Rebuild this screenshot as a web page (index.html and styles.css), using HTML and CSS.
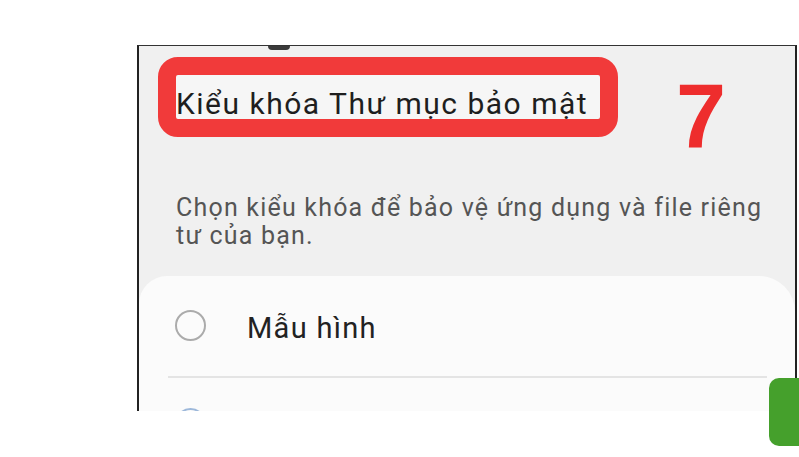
FILE: index.html
```html
<!DOCTYPE html>
<html lang="vi">
<head>
  <meta charset="UTF-8">
  <meta name="viewport" content="width=device-width, initial-scale=1.0">
  <title>Kiểu khóa Thư mục bảo mật</title>
  <link rel="stylesheet" href="styles.css">
</head>
<body>

<div class="shot">
  <div class="status"><span class="status-pill"></span></div>

  <div class="head">
    <div class="mark-box">
      <h1 class="title">Kiểu khóa Thư mục bảo mật</h1>
    </div>
    <div class="step">7</div>
  </div>

  <p class="desc">Chọn kiểu khóa để bảo vệ ứng dụng và file riêng tư của bạn.</p>

  <div class="card">
    <div class="row">
      <span class="radio"></span>
      <span class="label">Mẫu hình</span>
    </div>
    <div class="divider"></div>
    <!-- hàng tiếp theo bị cắt ở mép ảnh -->
    <div class="row row-peek">
      <span class="radio radio-on"></span>
    </div>
  </div>
</div>

<!-- mép nút xanh bên phải -->
<div class="side-tab"></div>

</body>
</html>
```

FILE: styles.css
```css
body {
  margin: 0;
  background-color: #fff;
  font-family: Roboto, "Noto Sans", sans-serif;
}

.shot {
  margin: 45px 0 0 137px;
  width: 656px;
  height: 365px;
  overflow: hidden;
  background-color: #f0f0f0;
  border-top: 1px solid #333;
  border-left: 2px solid #222;
  border-right: 2px solid #222;
}

.status {
  height: 11px;
}

.status-pill {
  display: block;
  width: 22px;
  height: 4px;
  margin-left: 129px;
  background-color: #3a3a3a;
  border-radius: 0 0 4px 4px;
}

.head {
  display: flex;
  align-items: flex-start;
  padding-left: 19px;
}

.mark-box {
  width: 424px;
  height: 44px;
  border: 18px solid #f13a3a;
  border-radius: 20px;
  background-color: #f6f6f6;
}

.title {
  margin: 0;
  padding-top: 11px;
  font-size: 30px;
  font-weight: 400;
  line-height: 35px;
  letter-spacing: 1.5px;
  color: #1e1e1e;
  white-space: nowrap;
}

.step {
  margin: 14px 0 0 58px;
  font-family: "Liberation Sans", Arial, sans-serif;
  font-weight: 700;
  font-size: 90px;
  line-height: 90px;
  color: #ee2d2d;
}

.desc {
  width: 590px;
  margin: 33px 0 0;
  padding-left: 37px;
  font-size: 25px;
  line-height: 28px;
  letter-spacing: 1.2px;
  color: #555;
}

.card {
  margin-top: 26px;
  background-color: #fbfbfb;
  border-radius: 28px 36px 0 0;
}

.row {
  display: flex;
  align-items: center;
  gap: 41px;
  padding: 30px 0 32px 36px;
}

.row-peek {
  padding-top: 30px;
}

.radio {
  width: 27px;
  height: 27px;
  border: 2px solid #ababab;
  border-radius: 50%;
}

.radio-on {
  border-color: #9db8da;
}

.label {
  padding-top: 7px;
  font-size: 29px;
  line-height: 31px;
  letter-spacing: 1.3px;
  color: #222;
}

.divider {
  height: 2px;
  margin: 0 28px 0 29px;
  background-color: #e4e4e4;
}

.side-tab {
  position: absolute;
  top: 378px;
  right: 0;
  width: 30px;
  height: 68px;
  background-color: #45a02c;
  border-radius: 10px 0 0 10px;
}
```
